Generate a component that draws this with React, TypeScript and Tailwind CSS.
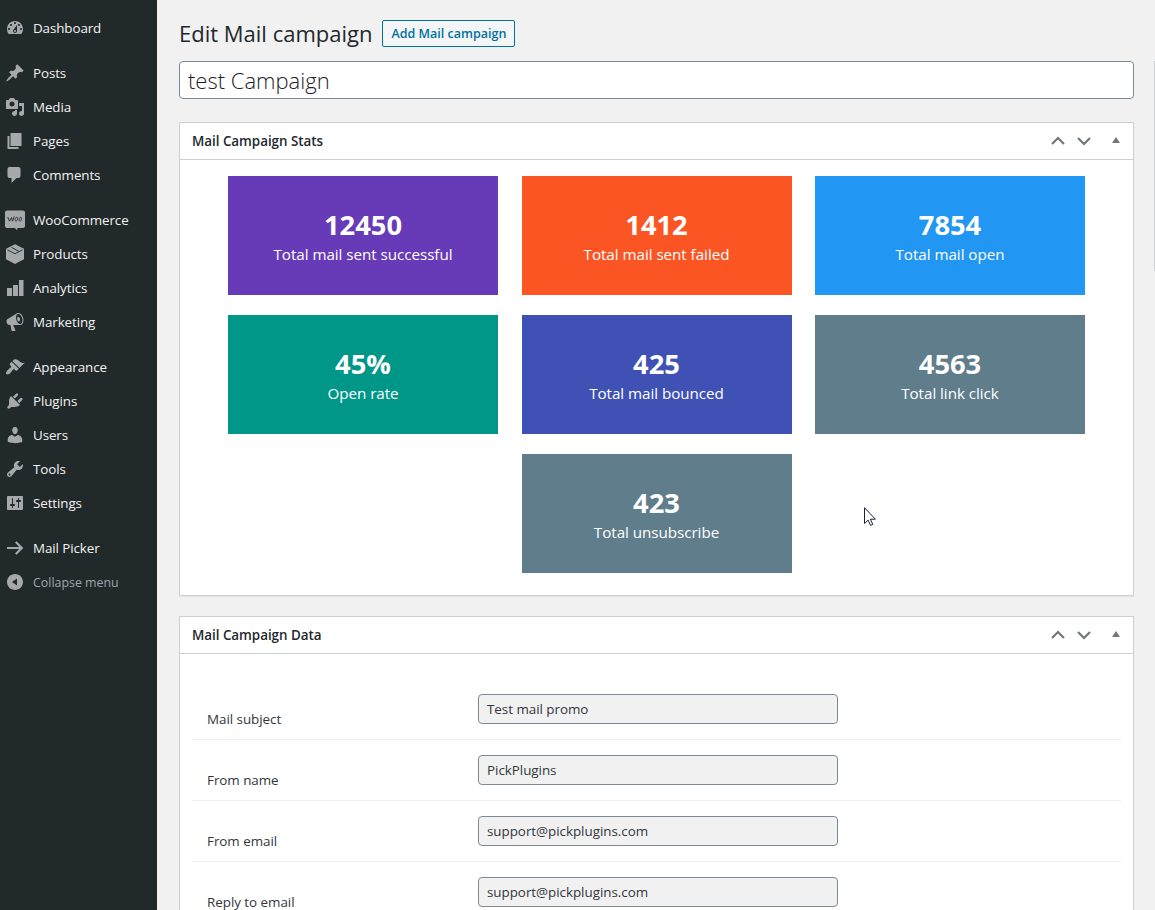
import type { ReactNode } from "react";

type MenuItem = { label: string; icon: ReactNode };

const P = ({ d, transform }: { d: string; transform?: string }) => (
  <path d={d} transform={transform} fillRule="evenodd" />
);

const groups: MenuItem[][] = [
  [
    {
      label: "Dashboard",
      icon: <P d="M3.76 16h12.48c1.1-1.37 1.76-3.11 1.76-5 0-4.42-3.58-8-8-8s-8 3.58-8 8c0 1.89.66 3.63 1.76 5zM10 4c.55 0 1 .45 1 1s-.45 1-1 1-1-.45-1-1 .45-1 1-1zM6 6c.55 0 1 .45 1 1s-.45 1-1 1-1-.45-1-1 .45-1 1-1zm8 0c.55 0 1 .45 1 1s-.45 1-1 1-1-.45-1-1 .45-1 1-1zm-5.37 5.55L12 7v6c0 1.1-.9 2-2 2s-2-.9-2-2c0-.57.24-1.08.63-1.45zM4 10c.55 0 1 .45 1 1s-.45 1-1 1-1-.45-1-1 .45-1 1-1zm12 0c.55 0 1 .45 1 1s-.45 1-1 1-1-.45-1-1 .45-1 1-1zm-5 3c0-.55-.45-1-1-1s-1 .45-1 1 .45 1 1 1 1-.45 1-1z" />,
    },
  ],
  [
    {
      label: "Posts",
      icon: <P d="M10.44 3.02l1.82-1.82 6.36 6.35-1.83 1.82c-1.05-.68-2.48-.57-3.41.36l-.75.75c-.92.93-1.04 2.35-.35 3.41l-1.83 1.82-2.41-2.41-2.8 2.79c-.42.42-3.38 2.71-3.8 2.29s1.86-3.39 2.28-3.81l2.79-2.79L4.1 9.36l1.83-1.82c1.05.69 2.48.57 3.4-.36l.75-.75c.93-.92 1.05-2.35.36-3.41z" />,
    },
    {
      label: "Media",
      icon: <P d="M13 11V4c0-.55-.45-1-1-1h-1.67L9 1H5L3.67 3H2c-.55 0-1 .45-1 1v7c0 .55.45 1 1 1h10c.55 0 1-.45 1-1zM7 4.5c1.38 0 2.5 1.12 2.5 2.5S8.38 9.5 7 9.5 4.5 8.38 4.5 7 5.62 4.5 7 4.5zM14 6h5v10.5c0 1.38-1.12 2.5-2.5 2.5S14 17.88 14 16.5s1.12-2.5 2.5-2.5c.17 0 .34.02.5.05V9h-3V6zm-4 8.05V13h2v3.5c0 1.38-1.12 2.5-2.5 2.5S7 17.88 7 16.5 8.12 14 9.5 14c.17 0 .34.02.5.05z" />,
    },
    { label: "Pages", icon: <P d="M6 15V2h11v13H6zm-1 1h9v2H3V5h2v11z" transform="translate(-.5 0)" /> },
    {
      label: "Comments",
      icon: <P d="M5 2h9c1.1 0 2 .9 2 2v7c0 1.1-.9 2-2 2h-2l-5 5v-5H5c-1.1 0-2-.9-2-2V4c0-1.1.9-2 2-2z" transform="translate(-.5 0)" />,
    },
  ],
  [
    {
      label: "WooCommerce",
      icon: (
        <>
          <P d="M2 .5h16c1.1 0 2 .9 2 2V16c0 1.1-.9 2-2 2h-5.500l-.3 2.400L10 18H2c-1.1 0-2-.9-2-2V2.500c0-1.100.9-2 2-2z" />
          <path
            d="M2.800 7l1.600 4.200L6.500 7.500l1 3.700L9.200 6.500M12 7.200c-1.300 0-2 1.300-2 2.500 0 1.900 2.600 1.700 2.600-1 0-.8-.2-1.300-.6-1.500zM16 7.200c-1.300 0-2 1.300-2 2.500 0 1.900 2.600 1.700 2.600-1 0-.8-.2-1.300-.6-1.500z"
            fill="none"
            stroke="#30373a"
            strokeWidth="1"
          />
        </>
      ),
    },
    {
      label: "Products",
      icon: (
        <>
          <path d="M10 .3l9 4.500v10.400L10 20l-9-4.800V4.800z" />
          <path d="M2.500 5.800L10 9.800l7.500-4M6.500 3.400l7.500 4" fill="none" stroke="#22292a" strokeWidth=".9" />
        </>
      ),
    },
    { label: "Analytics", icon: <P d="M18.500 18V2h-4.500v16h4.500zm-5.500 0V7H8v11h5zm-6 0v-8H2v8h5z" /> },
    {
      label: "Marketing",
      icon: <P d="M18.15 5.94c.46 1.62.38 3.22-.02 4.48-.42 1.28-1.26 2.18-2.3 2.48-.16.06-.26.06-.4.06-.06.02-.12.02-.18.02-.06.02-.14.02-.22.02h-6.8l2.22 5.5c.02.14-.06.26-.14.34-.08.1-.24.16-.34.16H6.95c-.1 0-.26-.06-.34-.16-.08-.08-.16-.2-.14-.34l-1-5.5H4.25l-.02-.02c-.5.06-1.08-.18-1.54-.62s-.88-1.08-1.06-1.88c-.24-.8-.2-1.56-.02-2.2.18-.62.58-1.08 1.06-1.3l.02-.02 9-5.4c.1-.06.18-.1.24-.16.06-.04.14-.08.24-.12.16-.08.28-.12.5-.18 1.04-.3 2.24.1 3.22.98s1.84 2.24 2.26 3.86zm-2.58 5.98h-.02c.4-.1.74-.34 1.04-.7.58-.7.86-1.76.86-3.04 0-.64-.1-1.3-.28-1.98-.34-1.36-1.02-2.5-1.78-3.24s-1.68-1.1-2.46-.88c-.82.22-1.4.96-1.7 2-.32 1.04-.28 2.36.06 3.72.38 1.36 1 2.5 1.8 3.24.78.74 1.62 1.1 2.48.88zm-2.54-7.08c.22-.04.42-.02.62.04.38.16.76.48 1.02 1s.42 1.2.42 1.78c0 .3-.04.56-.12.8-.18.48-.44.84-.86.94-.34.1-.8-.06-1.14-.4s-.64-.86-.78-1.5c-.18-.62-.12-1.24.02-1.72s.48-.84.82-.94z" />,
    },
  ],
  [
    {
      label: "Appearance",
      icon: <P d="M14.48 11.06L7.41 3.99l1.5-1.5c.5-.56 2.3-.47 3.51.32 1.21.8 1.43 1.28 2.91 2.1 1.18.64 2.45 1.26 4.45.85zm-.71.71L6.7 4.7 4.93 6.47c-.39.39-.39 1.02 0 1.41l1.06 1.06c.39.39.39 1.03 0 1.42-.6.6-1.43 1.11-2.21 1.69-.35.26-.7.53-1.01.84C1.43 14.23.4 16.08 1.4 17.07c.99 1 2.84-.03 4.18-1.36.31-.31.58-.66.85-1.02.57-.78 1.08-1.61 1.69-2.21.39-.39 1.02-.39 1.41 0l1.06 1.06c.39.39 1.02.39 1.41 0z" />,
    },
    {
      label: "Plugins",
      icon: <P d="M13.11 4.36L9.87 7.6 8 5.73l3.24-3.24c.35-.34 1.05-.2 1.56.32.52.51.66 1.21.31 1.55zm-8 1.77l.91-1.12 9.01 9.01-1.19.84c-.71.71-2.63 1.16-3.82 1.16H6.14L4.9 17.26c-.59.59-1.54.59-2.12 0-.59-.58-.59-1.53 0-2.12l1.24-1.24v-3.88c0-1.13.4-3.19 1.09-3.89zm7.26 3.97l3.24-3.24c.34-.35 1.04-.21 1.55.31.52.51.66 1.21.31 1.55l-3.24 3.25z" />,
    },
    {
      label: "Users",
      icon: <P d="M10 9.25c-2.27 0-2.73-3.44-2.73-3.44C7 4.02 7.82 2 9.97 2c2.16 0 2.98 2.02 2.71 3.81 0 0-.41 3.44-2.68 3.44zm0 2.57L12.72 10c2.39 0 4.52 2.33 4.52 4.53v2.49s-3.65 1.13-7.24 1.13c-3.65 0-7.24-1.13-7.24-1.13v-2.49c0-2.25 1.94-4.48 4.47-4.48z" />,
    },
    {
      label: "Tools",
      icon: <P d="M16.68 9.77c-1.34 1.34-3.3 1.67-4.95.99l-5.41 6.52c-.99.99-2.59.99-3.58 0s-.99-2.59 0-3.57l6.52-5.42c-.68-1.65-.35-3.61.99-4.95 1.28-1.28 3.12-1.62 4.72-1.06l-2.89 2.89 2.82 2.82 2.86-2.87c.53 1.58.18 3.39-1.08 4.65zM3.81 16.21c.4.39 1.04.39 1.43 0 .4-.4.4-1.04 0-1.43-.39-.4-1.03-.4-1.43 0-.39.39-.39 1.03 0 1.43z" />,
    },
    {
      label: "Settings",
      icon: <P d="M18 16V4c0-.55-.45-1-1-1H3c-.55 0-1 .45-1 1v12c0 .55.45 1 1 1h14c.55 0 1-.45 1-1zM8 11h1c.55 0 1 .45 1 1s-.45 1-1 1H8v1.500c0 .28-.22.500-.500.500s-.500-.22-.500-.500V13H6c-.55 0-1-.45-1-1s.45-1 1-1h1V5.500c0-.28.22-.500.500-.500s.500.22.500.500V11zm5-2h-1c-.55 0-1-.45-1-1s.45-1 1-1h1V5.500c0-.28.22-.500.500-.500s.500.22.500.500V7h1c.55 0 1 .45 1 1s-.45 1-1 1h-1v5.500c0 .28-.22.500-.500.500s-.500-.22-.500-.500V9z" />,
    },
  ],
  [
    {
      label: "Mail Picker",
      icon: <path d="M2 10h15M10.800 4l6 6-6 6" fill="none" stroke="currentColor" strokeWidth="2.200" />,
    },
  ],
];

const stats = [
  { value: "12450", label: "Total mail sent successful", bg: "bg-[#673ab7]" },
  { value: "1412", label: "Total mail sent failed", bg: "bg-[#fb5524]" },
  { value: "7854", label: "Total mail open", bg: "bg-[#2196f3]" },
  { value: "45%", label: "Open rate", bg: "bg-[#009688]" },
  { value: "425", label: "Total mail bounced", bg: "bg-[#3f51b5]" },
  { value: "4563", label: "Total link click", bg: "bg-[#607d8b]" },
  { value: "423", label: "Total unsubscribe", bg: "bg-[#607d8b]" },
];

const fields = [
  { label: "Mail subject", value: "Test mail promo" },
  { label: "From name", value: "PickPlugins" },
  { label: "From email", value: "support@pickplugins.com" },
  { label: "Reply to email", value: "support@pickplugins.com" },
];

function MenuIcon({ children }: { children: ReactNode }) {
  return (
    <svg viewBox="0 0 20 20" className="size-5 shrink-0 fill-current text-[#a5a9ad]">
      {children}
    </svg>
  );
}

function Sidebar() {
  return (
    <nav className="flex w-[157px] shrink-0 flex-col gap-[11px] bg-[#22292a] pt-[11px] text-[13.4px] text-[#f2f2f2]">
      {groups.map((group, i) => (
        <ul key={i}>
          {group.map((item) => (
            <li key={item.label} className="flex h-[34px] items-center gap-[8px] pl-[5px] tracking-[-0.1px] whitespace-nowrap">
              <MenuIcon>{item.icon}</MenuIcon>
              <span>{item.label}</span>
            </li>
          ))}
          {i === groups.length - 1 && (
            <li className="flex h-[34px] items-center gap-[8px] pl-[5px] text-[12.4px] whitespace-nowrap text-[#a0a5aa]">
              <MenuIcon>
                <P d="M10 2c4.420 0 8 3.580 8 8s-3.580 8-8 8-8-3.580-8-8 3.580-8 8-8zm2 11.500V6.500L7 10z" />
              </MenuIcon>
              <span className="pt-[2px]">Collapse menu</span>
            </li>
          )}
        </ul>
      ))}
    </nav>
  );
}

function Panel({ title, className, children }: { title: string; className: string; children: ReactNode }) {
  return (
    <section className={"shrink-0 border border-[#ccd0d4] bg-white shadow-[0_1px_1px_rgba(0,0,0,0.04)] " + className}>
      <header className="flex h-[37px] items-center justify-between border-b border-[#ccd0d4] pr-[12px] pl-[12px]">
        <h2 className="text-[13.4px] font-semibold tracking-[-0.03px] text-[#23282d]">{title}</h2>
        <div className="flex items-center text-[#72777c]">
          <svg viewBox="0 0 14 10" className="h-[10px] w-[14px]">
            <path d="M1 8l6-6 6 6" fill="none" stroke="currentColor" strokeWidth="2.200" />
          </svg>
          <svg viewBox="0 0 14 10" className="ml-[12px] h-[10px] w-[14px]">
            <path d="M1 2l6 6 6-6" fill="none" stroke="currentColor" strokeWidth="2.200" />
          </svg>
          <svg viewBox="0 0 8 10" className="mr-[1px] ml-[21px] h-[10px] w-[8px]">
            <path d="M0 7L4 1l4 6z" fill="currentColor" />
          </svg>
        </div>
      </header>
      {children}
    </section>
  );
}

export default function App() {
  return (
    <div className="relative flex h-[910px] w-[1155px] overflow-hidden bg-[#f1f1f1] font-['Open_Sans',sans-serif] text-[#32373c]">
      <Sidebar />
      <main className="flex w-[977px] shrink-0 flex-col pl-[22px]">
        <div className="mt-[20px] flex h-[27px] items-center gap-[10px]">
          <h1 className="text-[22px] leading-[27px] whitespace-nowrap text-[#23282d]">Edit Mail campaign</h1>
          <a className="flex h-[27px] w-[133px] items-center justify-center rounded-[2px] border border-[#0071a1] bg-[#f3f5f6] pt-[2px] text-[12.500px] font-semibold whitespace-nowrap text-[#0071a1]">
            Add Mail campaign
          </a>
        </div>
        <div className="mt-[14px] flex h-[38px] shrink-0 items-center rounded-[4px] border border-[#7e8993] bg-white px-[8px] text-[22px] font-light text-[#1d2226]">
          <span>test Campaign</span>
        </div>
        <Panel title="Mail Campaign Stats" className="mt-[23px] h-[474px]">
          <div className="flex flex-wrap justify-center gap-x-[23.500px] gap-y-[20px] px-[12px] pt-[16px]">
            {stats.map((s) => (
              <div key={s.value} className={"flex h-[119px] w-[270px] flex-col items-center pt-[33px] text-white " + s.bg}>
                <div className="text-[27.300px] leading-[32px] font-bold">{s.value}</div>
                <div className="text-[15.200px] leading-[26px] tracking-[-0.04px]">{s.label}</div>
              </div>
            ))}
          </div>
        </Panel>
        <Panel title="Mail Campaign Data" className="mt-[20px] h-[400px]">
          <div className="px-[12px] pt-[25px] text-[13.4px] tracking-[-0.03px]">
            {fields.map((f) => (
              <div key={f.label} className="flex h-[61px] border-b border-[#eee] pl-[15px]">
                <div className="w-[271px] pt-[30px] leading-[20px]">{f.label}</div>
                <div className="mt-[15px] flex h-[30px] w-[360px] items-center rounded-[4px] border border-[#7e8993] bg-[#f1f1f1] px-[8px]">
                  {f.value}
                </div>
              </div>
            ))}
          </div>
        </Panel>
      </main>
      <div className="absolute top-[61px] right-0 h-[210px] w-px bg-[#ccd0d4]" />
      <svg viewBox="0 0 12 19" className="absolute top-[507px] left-[864px] h-[19px] w-[12px]">
        <path d="M.5.700v15.800l3.600-3.400 2.400 5.300 2.300-1-2.400-5.200h5z" fill="#fff" stroke="#1b2233" strokeWidth="1" />
      </svg>
    </div>
  );
}
